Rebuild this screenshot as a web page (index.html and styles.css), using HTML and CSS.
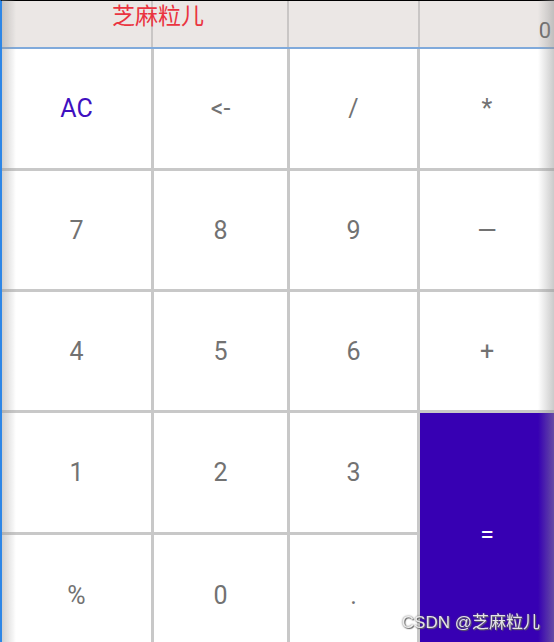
FILE: index.html
```html
<!DOCTYPE html>
<html lang="zh-CN">

<head>
    <meta charset="UTF-8">
    <meta name="viewport" content="width=device-width, initial-scale=1.0">
    <title>计算器</title>
    <link rel="stylesheet" href="styles.css">
</head>

<body>
    <div class="app">
        <div class="display">
            <p class="title">芝麻粒儿</p>
            <p class="result">0</p>
        </div>
        <div class="keys">
            <div class="key ac">AC</div>
            <div class="key">&lt;-</div>
            <div class="key">/</div>
            <div class="key">*</div>
            <div class="key">7</div>
            <div class="key">8</div>
            <div class="key">9</div>
            <div class="key">—</div>
            <div class="key">4</div>
            <div class="key">5</div>
            <div class="key">6</div>
            <div class="key">+</div>
            <div class="key">1</div>
            <div class="key">2</div>
            <div class="key">3</div>
            <div class="key equal">=</div>
            <div class="key">%</div>
            <div class="key">0</div>
            <div class="key">.</div>
        </div>
    </div>
    <div class="watermark">CSDN @芝麻粒儿</div>
</body>

</html>
```

FILE: styles.css
```css
body {
    margin: 0px;
    padding: 0px;
    width: 554px;
    height: 642px;
    overflow: hidden;
    background-color: white;
    font-family: Roboto, "Noto Sans CJK SC", sans-serif;
}

/* edge shadows of the screenshot */
body::before {
    content: '';
    position: fixed;
    top: 0px;
    left: 2px;
    width: 14px;
    height: 642px;
    background: linear-gradient(to right, rgba(150, 150, 150, 0.45), rgba(150, 150, 150, 0));
    z-index: 5;
}

body::after {
    content: '';
    position: fixed;
    top: 0px;
    right: 0px;
    width: 16px;
    height: 642px;
    background: linear-gradient(to left, rgba(150, 150, 150, 0.5), rgba(150, 150, 150, 0));
    z-index: 5;
}

.app {
    border-top: 1px solid black;
    border-left: 2px solid #2d86e6;
}

.display {
    display: flex;
    align-items: flex-start;
    height: 46px;
    background-color: #ebe7e5;
    background-image:
        linear-gradient(to right, transparent 149px, #c9c6c5 149px, #c9c6c5 151px, transparent 151px),
        linear-gradient(to right, transparent 285px, #c9c6c5 285px, #c9c6c5 287px, transparent 287px),
        linear-gradient(to right, transparent 416px, #c9c6c5 416px, #c9c6c5 418px, transparent 418px);
    border-bottom: 2px solid #80aadb;
}

.title {
    margin: 0px 0px 0px 110px;
    font-family: "Noto Sans CJK SC", sans-serif;
    font-size: 23px;
    line-height: 26px;
    color: #ea3440;
}

.result {
    margin: 19px 3px 0px auto;
    font-size: 22px;
    line-height: 1;
    color: #6a6a6a;
}

.keys {
    display: grid;
    grid-template-columns: 149px 133px 127px 134px;
    grid-template-rows: 119px 118px 118px 119px 120px;
    gap: 3px;
    background-color: #c8c8c8;
}

.key {
    display: flex;
    justify-content: center;
    align-items: center;
    background-color: white;
    font-size: 25px;
    color: #727272;
}

.ac {
    color: #3f10c0;
}

.equal {
    grid-column: 4;
    grid-row: 4 / span 2;
    background-color: #3700b3;
    color: white;
}

.watermark {
    position: fixed;
    right: 14px;
    bottom: 9px;
    font-family: "Liberation Sans", "Noto Sans CJK SC", sans-serif;
    font-size: 17px;
    color: rgba(255, 255, 255, 0.85);
    text-shadow: 0px 0px 2px #555, 1px 1px 1px #666;
    z-index: 6;
}
```
